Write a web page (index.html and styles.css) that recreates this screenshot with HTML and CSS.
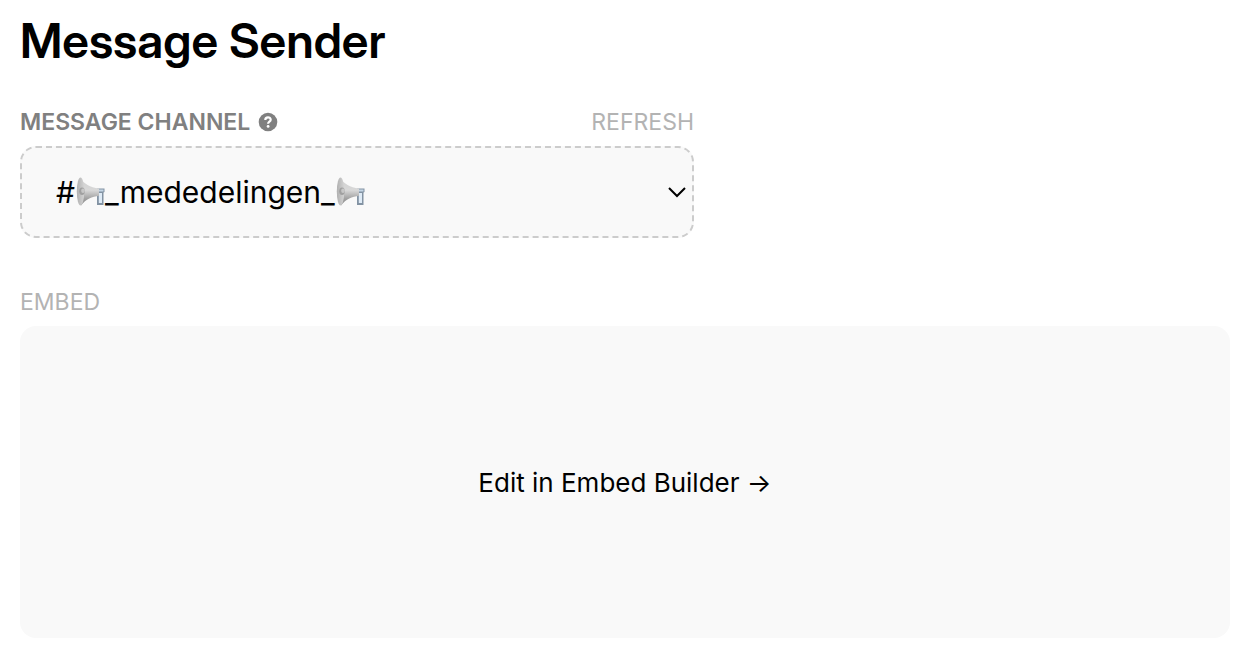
FILE: index.html
```
<!DOCTYPE html>
<html lang="en">
<head>
<meta charset="utf-8">
<title>Message Sender</title>
<link rel="stylesheet" href="styles.css">
</head>
<body>
<svg class="defs" width="0" height="0" aria-hidden="true">
  <defs>
    <linearGradient id="horn" x1="0" y1="0" x2="0" y2="1">
      <stop offset="0" stop-color="#d0d0d0"/>
      <stop offset="0.45" stop-color="#d8d8d8"/>
      <stop offset="0.75" stop-color="#a2a2a2"/>
      <stop offset="1" stop-color="#858585"/>
    </linearGradient>
    <linearGradient id="bell" x1="0" y1="0" x2="1" y2="0">
      <stop offset="0" stop-color="#b0b0b0"/>
      <stop offset="1" stop-color="#d4d4d4"/>
    </linearGradient>
    <symbol id="speaker" viewBox="0 0 30 30">
      <path d="M21 11.500h7.500v3.500l-1 .5v12.500h-6.500v-9z" fill="#8393a3"/>
      <path d="M22.800 16h3.200v10h-3.200z" fill="#dfebf6"/>
      <path d="M22 12.500h5.500v2H22z" fill="#c3d5e5"/>
      <path d="M4 .8C8 7 14 10.500 23 11.500v7.500c-7 .2-13 3-18 9.500z" fill="url(#horn)"/>
      <ellipse cx="4.500" cy="14.500" rx="3.700" ry="14" fill="url(#bell)"/>
      <ellipse cx="6" cy="14.300" rx="2.800" ry="3.800" fill="#a0a0a0"/>
      <ellipse cx="7" cy="13.800" rx="1.800" ry="2.200" fill="#c7c7c7"/>
    </symbol>
  </defs>
</svg>
<main class="page">
  <h1 class="title">Message Sender</h1>
  <section class="channel">
    <div class="channel-head">
      <label class="label label-strong" for="channel">MESSAGE CHANNEL</label>
      <button class="help" type="button" aria-label="Help">
        <svg viewBox="0 0 20 20" width="20" height="20"><circle cx="10" cy="10" r="9.300" fill="#808080"/><path d="M7.300 8c0-3.500 5.400-3.400 5.400-.3 0 2-2.600 2-2.600 4" fill="none" stroke="#fff" stroke-width="2.200"/><circle cx="10.100" cy="14.400" r="1.400" fill="#fff"/></svg>
      </button>
      <button class="label refresh" type="button">REFRESH</button>
    </div>
    <div class="field">
      <select class="select" id="channel"><option>#&#8195;_mededelingen_</option></select>
      <svg class="emoji emoji-first" aria-hidden="true"><use href="#speaker"/></svg>
      <svg class="emoji emoji-last" aria-hidden="true"><use href="#speaker"/></svg>
      <svg class="chevron" viewBox="0 0 20 20" aria-hidden="true"><path d="M2 6l8 8 8-8" fill="none" stroke="#000" stroke-width="2"/></svg>
    </div>
  </section>
  <section class="embed">
    <h2 class="label">EMBED</h2>
    <a class="builder" href="#builder">Edit in Embed Builder →</a>
  </section>
</main>
</body>
</html>
```
FILE: styles.css
```
* {
  box-sizing: border-box;
}

body {
  margin: 0;
  background: #fff;
  color: #000;
  font-family: Inter, "Liberation Sans", sans-serif;
}

button {
  padding: 0;
  border: 0;
  background: none;
  font-family: inherit;
}

.defs {
  position: absolute;
}

.page {
  display: flex;
  flex-direction: column;
  padding: 12px 20px 22px;
}

.title {
  margin: 0 0 36px;
  font-family: "Inter Display", Inter, "Liberation Sans", sans-serif;
  font-size: 48px;
  line-height: 58px;
  font-weight: 600;
}

.channel {
  width: 56%;
  min-width: 400px;
  max-width: 674px;
  margin-bottom: 48px;
}

.channel-head {
  display: flex;
  align-items: center;
  gap: 8px;
  margin-bottom: 8px;
}

.label {
  margin: 0;
  color: #b3b3b3;
  font-size: 23px;
  line-height: 32px;
  font-weight: 400;
}

.label-strong {
  color: #808080;
  font-weight: 600;
}

.help {
  display: flex;
}

.refresh {
  margin-left: auto;
}

.field {
  position: relative;
}

.select {
  display: block;
  width: 100%;
  height: 92px;
  padding: 0 34px;
  appearance: none;
  border: 2px dashed #ccc;
  border-radius: 16px;
  background: #f9f9f9;
  color: #000;
  font-family: inherit;
  font-size: 30px;
}

.emoji {
  position: absolute;
  top: 31px;
  width: 30px;
  height: 30px;
  pointer-events: none;
}

.emoji-first {
  left: 56px;
}

.emoji-last {
  left: 316px;
}

.chevron {
  position: absolute;
  top: 36px;
  right: 7px;
  width: 20px;
  height: 20px;
  pointer-events: none;
}

.embed {
  display: flex;
  flex-direction: column;
  gap: 8px;
}

.builder {
  display: flex;
  align-items: center;
  justify-content: center;
  padding: 141px 20px 139px;
  border-radius: 16px;
  background: #f9f9f9;
  color: #000;
  font-size: 26px;
  line-height: 32px;
  text-decoration: none;
}
```
